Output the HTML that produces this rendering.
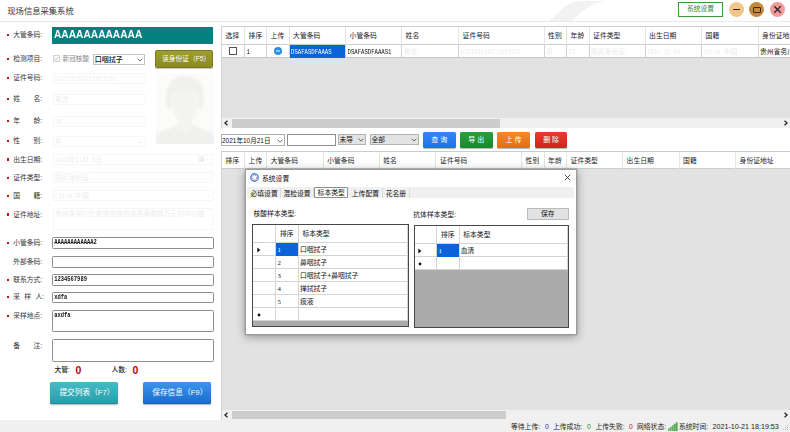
<!DOCTYPE html>
<html lang="zh-CN">
<head>
<meta charset="utf-8">
<title>现场信息采集系统</title>
<style>
*{box-sizing:border-box;margin:0;padding:0}
html,body{width:790px;height:432px;overflow:hidden;background:#fff}
body{position:relative;font-family:"Liberation Sans","Noto Sans CJK SC",sans-serif;font-size:6.8px;color:#222;line-height:1}
.abs{position:absolute}
.t{position:absolute;white-space:nowrap;line-height:10px;height:10px}
.lbl{position:absolute;left:13.2px;white-space:nowrap;line-height:10px;height:10px;color:#333}
.dot{position:absolute;left:7px;width:2.4px;height:2.4px;background:#cc1111}
.inp{position:absolute;background:#fff;border:1px solid #8e8e8e;border-radius:1.3px;font-size:5.45px;font-weight:bold;padding-left:1.2px;line-height:9.6px;color:#111;font-family:"Liberation Mono","Noto Sans CJK SC",monospace}
.dis{position:absolute;background:#fff;border:1px solid #f6f6f6;font-size:6.8px;padding-left:1.5px;color:#ededed;white-space:nowrap;overflow:hidden}
.tall{display:inline-block;transform:scaleY(1.22);transform-origin:0 55%}
.btn{position:absolute;color:#fff;text-align:center;border-radius:1.5px;white-space:nowrap}
.hd{position:absolute;top:0;height:100%;border-right:1px solid #e4e4e4;padding-left:3.6px;white-space:nowrap;overflow:hidden}
.cell{position:absolute;top:0;height:100%;border-right:1px solid #d0d0d0;padding-left:1.5px;white-space:nowrap;overflow:hidden;font-size:6.8px}
.m{display:inline-block;font-family:"Liberation Mono",monospace;font-size:5.65px;transform:scaleY(1.22);transform-origin:0 55%;white-space:pre}
</style>
</head>
<body>

<div class="abs" style="left:0;top:0;width:790px;height:21px;background:#fff;overflow:hidden">
<svg class="abs" style="left:540px;top:0" width="80" height="21" viewBox="0 0 80 21"><path d="M9 21 L32 21 Q44 8 58 2.5 Q63 1 66 1 L40 1 Q32 1.5 26 6 Z" fill="#f2f2f2"/></svg>
<div class="t" style="left:7.3px;top:6.3px;font-size:8.3px;line-height:11px;height:11px;color:#333">现场信息采集系统</div>
<div class="abs" style="left:678px;top:2px;width:45px;height:14.5px;border:1px solid #3c9a3c;background:#fff;color:#2e8b2e;text-align:center;line-height:12.5px;font-size:6.8px">系统设置</div>
<div class="abs" style="left:728.5px;top:2px;width:15px;height:15px;border-radius:50%;background:#f2c687"></div><div class="abs" style="left:732.5px;top:9px;width:7px;height:1.3px;background:#222"></div>
<div class="abs" style="left:749px;top:2px;width:15px;height:15px;border-radius:50%;background:#c6893a"></div><div class="abs" style="left:752.5px;top:6.5px;width:8px;height:6px;border:1.2px solid #3a2a10;border-radius:1px"></div>
<div class="abs" style="left:769.5px;top:2px;width:15px;height:15px;border-radius:50%;background:#f19a9a"></div><svg class="abs" style="left:769.5px;top:2px" width="15" height="15" viewBox="0 0 15 15"><path d="M4.3 4.3 L10.7 10.7 M10.7 4.3 L4.3 10.7" stroke="#222" stroke-width="1.25" fill="none"/></svg>
</div>
<div class="abs" style="left:0;top:21px;width:790px;height:1px;background:#e9e9e9"></div>
<div class="dot" style="top:34px"></div>
<div class="lbl" style="top:30.4px">大管条码:</div>
<div class="dot" style="top:58px"></div>
<div class="lbl" style="top:54.4px">检测项目:</div>
<div class="dot" style="top:77px"></div>
<div class="lbl" style="top:73.4px">证件号码:</div>
<div class="dot" style="top:98px"></div>
<div class="lbl" style="top:94.4px">姓　　名:</div>
<div class="dot" style="top:120px"></div>
<div class="lbl" style="top:116.4px">年　　龄:</div>
<div class="dot" style="top:139.5px"></div>
<div class="lbl" style="top:135.9px">性　　别:</div>
<div class="dot" style="top:158.4px"></div>
<div class="lbl" style="top:154.8px">出生日期:</div>
<div class="dot" style="top:176.5px"></div>
<div class="lbl" style="top:172.9px">证件类型:</div>
<div class="dot" style="top:194.5px"></div>
<div class="lbl" style="top:190.9px">国　　籍:</div>
<div class="dot" style="top:213.4px"></div>
<div class="lbl" style="top:209.8px">证件地址:</div>
<div class="dot" style="top:242px"></div>
<div class="lbl" style="top:238.4px">小管条码:</div>
<div class="lbl" style="top:256.9px">外部条码:</div>
<div class="dot" style="top:278.5px"></div>
<div class="lbl" style="top:274.9px">联系方式:</div>
<div class="dot" style="top:296px"></div>
<div class="lbl" style="top:292.4px">采<span style="margin:0 4.3px">样</span>人:</div>
<div class="dot" style="top:314.5px"></div>
<div class="lbl" style="top:310.9px">采样地点:</div>
<div class="lbl" style="top:340.9px">备　　注:</div>
<div class="abs" style="left:52.3px;top:27.1px;width:161px;height:16.7px;background:#048080;color:#fff;font-weight:bold;font-size:10.2px;line-height:16px;padding-left:1.7px;white-space:nowrap"><span style="display:inline-block;transform:scaleY(1.1);transform-origin:50% 60%">AAAAAAAAAAAA</span></div>
<div class="abs" style="left:52.7px;top:55.3px;width:7px;height:7px;border:1px solid #d2d2d2;background:#f7f7f7"></div>
<svg class="abs" style="left:52.7px;top:55.3px" width="7" height="7" viewBox="0 0 7 7"><path d="M1.6 3.5 L3 5 L5.5 2" stroke="#b8b8b8" stroke-width="0.8" fill="none"/></svg>
<div class="t" style="left:62.5px;top:54.2px;color:#8c8c8c;font-size:6.7px">新冠核酸</div>
<div class="abs" style="left:92.5px;top:53.7px;width:52.5px;height:11.2px;border:1px solid #c2c2c2;background:#fff"></div>
<div class="t" style="left:94.7px;top:54.6px;font-size:7px;font-weight:500;color:#111">口咽拭子</div>
<svg class="abs" style="left:136.7px;top:57.9px" width="6" height="4" viewBox="0 0 6 4"><path d="M0.6 0.7 L3 3.1 L5.4 0.7" stroke="#444" stroke-width="0.8" fill="none"/></svg>
<div class="btn" style="left:155.4px;top:50.2px;width:57.9px;height:17.8px;padding-left:3.6px;border:0.6px solid #78781a;background:linear-gradient(#9e9e30,#8a8a1e);line-height:16.6px;font-size:6.75px;box-shadow:0 1px 1px rgba(0,0,0,.22)">读身份证（F5）</div>
<div class="dis" style="left:52.5px;top:72.5px;width:93px;height:11px;line-height:9px"><span class="m">52212619921106153l</span></div>
<div class="dis" style="left:52.5px;top:93.5px;width:93px;height:11px;line-height:9px">黄念</div>
<div class="dis" style="left:52.5px;top:115.6px;width:93px;height:11px;line-height:9px"><span class="m">29</span></div>
<div class="dis" style="left:52.5px;top:135.8px;width:93px;height:11px;line-height:9px">男</div>
<div class="dis" style="left:52.5px;top:153.5px;width:160.5px;height:11px;line-height:9px"><span class="m">1992</span>年<span class="m">11</span>月<span class="m"> 5</span>日</div>
<div class="dis" style="left:52.5px;top:172px;width:160.5px;height:11px;line-height:9px">居民身份证</div>
<div class="dis" style="left:52.5px;top:190px;width:160.5px;height:11px;line-height:9px"><span class="m">China </span>中国</div>
<div class="dis" style="left:52.5px;top:208px;width:160.5px;height:22px;line-height:9px">贵州省务川仡佬族苗族自治县黄都镇万云村中心组</div>
<svg class="abs" style="left:138px;top:140.8px" width="5" height="3.4" viewBox="0 0 5 3.4"><path d="M0.5 0.6 L2.5 2.6 L4.5 0.6" stroke="#e9e9e9" stroke-width="0.7" fill="none"/></svg>
<svg class="abs" style="left:205.5px;top:176.8px" width="5" height="3.4" viewBox="0 0 5 3.4"><path d="M0.5 0.6 L2.5 2.6 L4.5 0.6" stroke="#e9e9e9" stroke-width="0.7" fill="none"/></svg>
<svg class="abs" style="left:205.5px;top:194.3px" width="5" height="3.4" viewBox="0 0 5 3.4"><path d="M0.5 0.6 L2.5 2.6 L4.5 0.6" stroke="#e9e9e9" stroke-width="0.7" fill="none"/></svg>
<div class="abs" style="left:198px;top:156.2px;width:6px;height:6px;border:0.8px solid #ebebeb;border-radius:1px"></div><div class="abs" style="left:199.5px;top:158.2px;width:3px;height:2.4px;background:#ededed"></div><div class="abs" style="left:205.8px;top:158.6px;width:0;height:0;border-left:1.5px solid transparent;border-right:1.5px solid transparent;border-top:2px solid #e8e8e8"></div>
<div class="abs" style="left:156px;top:72.8px;width:58px;height:71px;background:#fbfbfa;overflow:hidden"><svg width="58" height="71" viewBox="0 0 58 71"><defs><filter id="bl" x="-20%" y="-20%" width="140%" height="140%"><feGaussianBlur stdDeviation="1.3"/></filter></defs><g filter="url(#bl)"><path d="M-2 73 L-2 63 C4 58 14 56 22 52 L36 52 C44 56 54 58 60 63 L60 73 Z" fill="#f0f0ef"/><path d="M22 44 L36 44 L36 54 L29 60 L22 54 Z" fill="#f4f4f2"/><path d="M10.5 30 C8 12 17 3 29 3 C42 3 50 12 47.5 30 C47 35 45 37 43 36 L42 22 L16 22 L15 36 C13 37 11 35 10.5 30 Z" fill="#f0f0ef"/><path d="M16.5 20 C22 17 36 17 41.5 20 C43 32 42 42 36 47 C32 51 26 51 22 47 C16 42 15 32 16.5 20 Z" fill="#f4f4f2"/><path d="M20 26 L26 26 M32 26 L38 26" stroke="#ebebea" stroke-width="1.2"/><path d="M26 41 L32 41" stroke="#eeeeec" stroke-width="1"/></g></svg></div>
<div class="inp" style="left:52.1px;top:237.3px;width:162px;height:11.9px"><span class="tall">AAAAAAAAAAAA2</span></div>
<div class="inp" style="left:52.1px;top:256.3px;width:162px;height:11.7px"></div>
<div class="inp" style="left:52.1px;top:274.1px;width:162px;height:11.8px"><span class="tall">1234567989</span></div>
<div class="inp" style="left:52.1px;top:291.6px;width:162px;height:11.9px"><span class="tall">xdfa</span></div>
<div class="inp" style="left:52.1px;top:309.8px;width:162px;height:22.6px"><span class="tall">axdfa</span></div>
<div class="inp" style="left:52.1px;top:339.3px;width:162px;height:22.6px"></div>
<div class="t" style="left:54.5px;top:365px;font-size:6.8px;font-weight:500;color:#222">大管:</div><div class="t" style="left:75.5px;top:364.5px;font-size:10.5px;font-weight:bold;color:#c00000;line-height:11px;height:11px">0</div>
<div class="t" style="left:111.5px;top:365px;font-size:6.8px;font-weight:500;color:#222">人数:</div><div class="t" style="left:132.5px;top:364.5px;font-size:10.5px;font-weight:bold;color:#c00000;line-height:11px;height:11px">0</div>
<div class="btn" style="left:50px;top:381.6px;width:68.3px;height:22.6px;padding-left:5.6px;background:linear-gradient(#45bcc4,#279eac);line-height:22px;font-size:7.7px;box-shadow:0 1px 1.5px rgba(0,0,0,.3),inset 0 -1px 0 rgba(0,0,0,.12)">提交列表（F7）</div>
<div class="btn" style="left:143px;top:381.6px;width:68px;height:22.6px;padding-left:5.6px;background:linear-gradient(#3d94ee,#176ccc);line-height:22px;font-size:7.7px;box-shadow:0 1px 1.5px rgba(0,0,0,.3),inset 0 -1px 0 rgba(0,0,0,.12)">保存信息（F9）</div>
<div class="abs" style="left:221.3px;top:25.7px;width:569px;height:102.3px;background:#e2e2e2;border-top:1.6px solid #d0d0d0;border-left:1px solid #d2d2d2"></div>
<div class="abs" style="left:0;top:27.3px;width:790px;height:17.5px;overflow:hidden">
<div class="abs" style="left:222px;top:0;width:568px;height:17.5px;background:#fff;border-bottom:1px solid #cccccc"></div>
<div class="hd" style="left:222px;width:23px;line-height:18.4px">选择</div>
<div class="hd" style="left:245px;width:22px;line-height:18.4px">排序</div>
<div class="hd" style="left:267px;width:22.5px;line-height:18.4px">上传</div>
<div class="hd" style="left:289.5px;width:56.5px;line-height:18.4px">大管条码</div>
<div class="hd" style="left:346px;width:56px;line-height:18.4px">小管条码</div>
<div class="hd" style="left:402px;width:57px;line-height:18.4px">姓名</div>
<div class="hd" style="left:459px;width:85.5px;line-height:18.4px">证件号码</div>
<div class="hd" style="left:544.5px;width:22.5px;line-height:18.4px">性别</div>
<div class="hd" style="left:567px;width:22.5px;line-height:18.4px">年龄</div>
<div class="hd" style="left:589.5px;width:56.0px;line-height:18.4px">证件类型</div>
<div class="hd" style="left:645.5px;width:56.5px;line-height:18.4px">出生日期</div>
<div class="hd" style="left:702px;width:56.5px;line-height:18.4px">国籍</div>
<div class="hd" style="left:758.5px;width:56.5px;line-height:18.4px">身份证地址</div>
</div>
<div class="abs" style="left:0;top:44.8px;width:790px;height:13px;overflow:hidden">
<div class="abs" style="left:222px;top:0;width:568px;height:13px;background:#fff;border-bottom:1px solid #c6c6c6"></div>
<div class="cell" style="left:222px;width:23px;line-height:13px;color:#111;"></div>
<div class="cell" style="left:245px;width:22px;line-height:13px;color:#111;"><span class="m">1</span></div>
<div class="cell" style="left:267px;width:22.5px;line-height:13px;color:#111;"></div>
<div class="cell" style="left:289.5px;width:56.5px;line-height:13px;background:#0a64d8;color:#fff;"><span class="m">DSAFASDFAAAS</span></div>
<div class="cell" style="left:346px;width:56px;line-height:13px;color:#111;"><span class="m">DSAFASDFAAAS1</span></div>
<div class="cell" style="left:402px;width:57px;line-height:13px;color:#ececec;">黄念</div>
<div class="cell" style="left:459px;width:85.5px;line-height:13px;color:#ececec;"><span class="m">52212619921106153l</span></div>
<div class="cell" style="left:544.5px;width:22.5px;line-height:13px;color:#ececec;">男</div>
<div class="cell" style="left:567px;width:22.5px;line-height:13px;color:#ececec;"><span class="m">29</span></div>
<div class="cell" style="left:589.5px;width:56.0px;line-height:13px;color:#ececec;">居民身份证</div>
<div class="cell" style="left:645.5px;width:56.5px;line-height:13px;color:#ececec;"><span class="m">1992-11-05</span></div>
<div class="cell" style="left:702px;width:56.5px;line-height:13px;color:#ececec;"><span class="m">China </span>中国</div>
<div class="cell" style="left:758.5px;width:56.5px;line-height:13px;color:#111;">贵州省务川仡佬族</div>
<div class="abs" style="left:229.3px;top:2.4px;width:7.6px;height:7.6px;border:0.8px solid #555;background:#fff"></div>
<div class="abs" style="left:274px;top:2.2px;width:8px;height:8px;border-radius:50%;background:#2a8fe6"></div><div class="abs" style="left:276.2px;top:4.8px;width:3.6px;height:2.8px;border-radius:0.8px;background:#8ccaf6"></div>
</div>
<div class="abs" style="left:222px;top:118.2px;width:568px;height:9.7px;background:#f0f0f0"></div>
<div class="abs" style="left:231.5px;top:119px;width:268.5px;height:8.5px;background:#cdcdcd"></div>
<svg class="abs" style="left:224.3px;top:120.2px" width="4" height="6" viewBox="0 0 4 6"><path d="M3.5 0.7 L0.9 3 L3.5 5.3" stroke="#222" stroke-width="1.25" fill="none"/></svg>
<svg class="abs" style="left:783.5px;top:120.2px" width="4" height="6" viewBox="0 0 4 6"><path d="M0.5 0.7 L3.1 3 L0.5 5.3" stroke="#222" stroke-width="1.25" fill="none"/></svg>
<div class="abs" style="left:220.5px;top:134.4px;width:64px;height:11.5px;border:1px solid #adadad;background:#fff"></div>
<div class="t" style="left:222px;top:135.5px;font-size:6.5px;color:#111">2021年10月21日</div>
<svg class="abs" style="left:276.8px;top:138.6px" width="6" height="4" viewBox="0 0 6 4"><path d="M0.6 0.7 L3 3.1 L5.4 0.7" stroke="#444" stroke-width="0.8" fill="none"/></svg>
<div class="abs" style="left:287px;top:134.4px;width:49px;height:11.5px;border:1px solid #8f8f8f;background:#fff"></div>
<div class="abs" style="left:338px;top:134px;width:28px;height:11.2px;border:1px solid #b2b2b2;background:#e3e3e3"></div>
<div class="t" style="left:339.5px;top:135px;font-size:6.8px;color:#111">未导</div>
<svg class="abs" style="left:357.5px;top:138.2px" width="6" height="4" viewBox="0 0 6 4"><path d="M0.6 0.7 L3 3.1 L5.4 0.7" stroke="#444" stroke-width="0.8" fill="none"/></svg>
<div class="abs" style="left:369.6px;top:134px;width:49px;height:11.2px;border:1px solid #b2b2b2;background:#e3e3e3"></div>
<div class="t" style="left:371.5px;top:135px;font-size:6.8px;color:#111">全部</div>
<svg class="abs" style="left:410.5px;top:138.2px" width="6" height="4" viewBox="0 0 6 4"><path d="M0.6 0.7 L3 3.1 L5.4 0.7" stroke="#444" stroke-width="0.8" fill="none"/></svg>
<div class="btn" style="left:423px;top:132.3px;width:32.5px;height:15.6px;background:linear-gradient(#3386f5,#2070e6);line-height:15.4px;font-size:7px;box-shadow:0 0.5px 1px rgba(0,0,0,.3)">查 询</div>
<div class="btn" style="left:460px;top:132.3px;width:32.5px;height:15.6px;background:linear-gradient(#29a03c,#1a882c);line-height:15.4px;font-size:7px;box-shadow:0 0.5px 1px rgba(0,0,0,.3)">导 出</div>
<div class="btn" style="left:497.4px;top:132.3px;width:32.5px;height:15.6px;background:linear-gradient(#f4892a,#e26e12);line-height:15.4px;font-size:7px;box-shadow:0 0.5px 1px rgba(0,0,0,.3)">上 传</div>
<div class="btn" style="left:534.9px;top:132.3px;width:32.5px;height:15.6px;background:linear-gradient(#ea3a30,#d0241c);line-height:15.4px;font-size:7px;box-shadow:0 0.5px 1px rgba(0,0,0,.3)">删 除</div>
<div class="abs" style="left:221.3px;top:150.8px;width:569px;height:269.2px;background:#e2e2e2;border-top:1.2px solid #cbcbcb;border-left:1px solid #d2d2d2"></div>
<div class="abs" style="left:0;top:152px;width:790px;height:17.4px;overflow:hidden">
<div class="abs" style="left:222px;top:0;width:568px;height:17.4px;background:#fff;border-bottom:1px solid #cccccc"></div>
<div class="hd" style="left:222px;width:23px;line-height:17px">排序</div>
<div class="hd" style="left:245px;width:22.19999999999999px;line-height:17px">上传</div>
<div class="hd" style="left:267.2px;width:56.5px;line-height:17px">大管条码</div>
<div class="hd" style="left:323.7px;width:56.0px;line-height:17px">小管条码</div>
<div class="hd" style="left:379.7px;width:56.80000000000001px;line-height:17px">姓名</div>
<div class="hd" style="left:436.5px;width:85.5px;line-height:17px">证件号码</div>
<div class="hd" style="left:522px;width:22.5px;line-height:17px">性别</div>
<div class="hd" style="left:544.5px;width:22.5px;line-height:17px">年龄</div>
<div class="hd" style="left:567px;width:56px;line-height:17px">证件类型</div>
<div class="hd" style="left:623px;width:56.5px;line-height:17px">出生日期</div>
<div class="hd" style="left:679.5px;width:56.5px;line-height:17px">国籍</div>
<div class="hd" style="left:736px;width:64px;line-height:17px">身份证地址</div>
</div>
<div class="abs" style="left:222px;top:409.5px;width:568px;height:10.5px;background:#f0f0f0"></div>
<div class="abs" style="left:231.5px;top:410.5px;width:274px;height:8.5px;background:#cdcdcd"></div>
<svg class="abs" style="left:224.3px;top:411.7px" width="4" height="6" viewBox="0 0 4 6"><path d="M3.5 0.7 L0.9 3 L3.5 5.3" stroke="#222" stroke-width="1.25" fill="none"/></svg>
<svg class="abs" style="left:783.5px;top:411.7px" width="4" height="6" viewBox="0 0 4 6"><path d="M0.5 0.7 L3.1 3 L0.5 5.3" stroke="#222" stroke-width="1.25" fill="none"/></svg>
<div class="abs" style="left:0;top:420px;width:790px;height:12px;background:#f0f0f0"></div>
<div class="t" style="left:511px;top:421.7px;color:#222">等待上传:</div><div class="t" style="left:545px;top:421.7px;color:#2030c0">0</div>
<div class="t" style="left:553px;top:421.7px;color:#222">上传成功:</div><div class="t" style="left:587px;top:421.7px;color:#2a8a2a">0</div>
<div class="t" style="left:595.5px;top:421.7px;color:#222">上传失败:</div><div class="t" style="left:629px;top:421.7px;color:#d02020">0</div>
<div class="t" style="left:637px;top:421.7px;color:#222">网络状态:</div>
<svg class="abs" style="left:668.4px;top:421.8px" width="10" height="9" viewBox="0 0 10 9"><rect x="0" y="6.2" width="1.8" height="2.8" fill="#6fba6f"/><rect x="1.95" y="4.8" width="1.8" height="4.2" fill="#66b566"/><rect x="3.9" y="3.3" width="1.8" height="5.7" fill="#5db05d"/><rect x="5.85" y="1.8" width="1.8" height="7.2" fill="#55ab55"/><rect x="7.8" y="0.3" width="1.8" height="8.7" fill="#4ea64e"/></svg>
<div class="t" style="left:679px;top:421.7px;color:#222">系统时间:</div>
<div class="t" style="left:712.5px;top:421.7px;color:#222;font-size:7.15px">2021-10-21 18:19:53</div>
<svg class="abs" style="left:782px;top:424px" width="7" height="7" viewBox="0 0 7 7"><g fill="#b5b5b5"><rect x="5" y="1" width="1" height="1"/><rect x="3" y="3" width="1" height="1"/><rect x="5" y="3" width="1" height="1"/><rect x="1" y="5" width="1" height="1"/><rect x="3" y="5" width="1" height="1"/><rect x="5" y="5" width="1" height="1"/></g></svg>
<div class="abs" style="left:245.0px;top:168.6px;width:332.1px;height:166.3px;background:#fff;border:1px solid #9c9c9c;box-shadow:0 2px 9px rgba(0,0,0,.34),0 0 2px rgba(0,0,0,.25)">
<svg class="abs" style="left:4.3px;top:3.4px" width="9" height="9" viewBox="0 0 18 18"><circle cx="9" cy="9" r="7.4" fill="#fff" stroke="#3f86dc" stroke-width="2.8"/><circle cx="9" cy="9" r="4.6" fill="none" stroke="#e05a90" stroke-width="2" stroke-dasharray="3 2"/><circle cx="9" cy="9" r="2.8" fill="#fff"/></svg>
<div class="t" style="left:16.0px;top:4.0px;color:#111">系统设置</div>
<svg class="abs" style="left:317.5px;top:4.4px" width="7" height="7" viewBox="0 0 7 7"><path d="M0.7 0.7 L6.3 6.3 M6.3 0.7 L0.7 6.3" stroke="#222" stroke-width="0.8" fill="none"/></svg>
<div class="abs" style="left:0.6px;top:17.1px;width:327.0px;height:11.6px;background:#f0f0f0"></div>
<div class="abs" style="left:2.0px;top:18.0px;width:33.19999999999999px;height:10.8px;border-right:1px solid #dcdcdc;text-align:center;line-height:11px;color:#111">必填设置</div>
<div class="abs" style="left:35.2px;top:18.0px;width:32.80000000000001px;height:10.8px;border-right:1px solid #dcdcdc;text-align:center;line-height:11px;color:#111">混检设置</div>
<div class="abs" style="left:68.2px;top:17.3px;width:34.0px;height:11.5px;border:1px solid #8c8c8c;border-radius:1px;background:#fff;text-align:center;line-height:10px;color:#111">标本类型</div>
<div class="abs" style="left:103.0px;top:18.0px;width:33.80000000000001px;height:10.8px;border-right:1px solid #dcdcdc;text-align:center;line-height:11px;color:#111">上传配置</div>
<div class="abs" style="left:136.8px;top:18.0px;width:27.19999999999999px;height:10.8px;border-right:1px solid #dcdcdc;text-align:center;line-height:11px;color:#111">花名册</div>
<div class="t" style="left:7.5px;top:39.9px;color:#111">核酸样本类型:</div>
<div class="t" style="left:167.3px;top:40.4px;color:#111">抗体样本类型:</div>
<div class="abs" style="left:281.0px;top:38.2px;width:41.7px;height:12px;background:#e2e2e2;border:1px solid #bcbcbc;text-align:center;line-height:10.5px;color:#111">保存</div>
<div class="abs" style="left:6.2px;top:54.8px;width:156.6px;height:102.4px;border:1px solid #474747;background:#ababab;overflow:hidden">
<div class="abs" style="left:0;top:0px;width:154.6px;height:17.7px;background:#fff;border-bottom:1px solid #d4d4d4">
<div class="abs" style="left:0px;top:0;width:23.3px;height:17.7px;border-right:1px solid #d4d4d4;padding-left:3.5px;line-height:18.9px;white-space:nowrap;color:#111;"></div>
<div class="abs" style="left:23.3px;top:0;width:22.499999999999996px;height:17.7px;border-right:1px solid #d4d4d4;padding-left:3.5px;line-height:18.9px;white-space:nowrap;color:#111;">排序</div>
<div class="abs" style="left:45.8px;top:0;width:108.8px;height:17.7px;border-right:1px solid #d4d4d4;padding-left:3.5px;line-height:18.9px;white-space:nowrap;color:#111;">标本类型</div>
</div>
<div class="abs" style="left:0;top:17.7px;width:154.6px;height:13.0px;background:#fff;border-bottom:1px solid #d4d4d4">
<div class="abs" style="left:0px;top:0;width:23.3px;height:13.0px;border-right:1px solid #d4d4d4;padding-left:1px;font-size:6.8px;line-height:14.2px;white-space:nowrap;color:#111;"><svg style="position:absolute;left:3.6px;top:4px" width="4" height="6" viewBox="0 0 4 6"><path d="M0.3 0.5 L3.4 3 L0.3 5.5 Z" fill="#111"/></svg></div>
<div class="abs" style="left:23.3px;top:0;width:22.499999999999996px;height:13.0px;border-right:1px solid #d4d4d4;padding-left:1.1px;font-size:6.8px;font-family:'Liberation Serif',serif;line-height:14.2px;white-space:nowrap;color:#111;background:#0a64d8;color:#fff;">1</div>
<div class="abs" style="left:45.8px;top:0;width:108.8px;height:13.0px;border-right:1px solid #d4d4d4;padding-left:1px;font-size:6.8px;line-height:14.2px;white-space:nowrap;color:#111;">口咽拭子</div>
</div>
<div class="abs" style="left:0;top:30.7px;width:154.6px;height:13.0px;background:#fff;border-bottom:1px solid #d4d4d4">
<div class="abs" style="left:0px;top:0;width:23.3px;height:13.0px;border-right:1px solid #d4d4d4;padding-left:1px;font-size:6.8px;line-height:14.2px;white-space:nowrap;color:#111;"></div>
<div class="abs" style="left:23.3px;top:0;width:22.499999999999996px;height:13.0px;border-right:1px solid #d4d4d4;padding-left:1.1px;font-size:6.8px;font-family:'Liberation Serif',serif;line-height:14.2px;white-space:nowrap;color:#111;">2</div>
<div class="abs" style="left:45.8px;top:0;width:108.8px;height:13.0px;border-right:1px solid #d4d4d4;padding-left:1px;font-size:6.8px;line-height:14.2px;white-space:nowrap;color:#111;">鼻咽拭子</div>
</div>
<div class="abs" style="left:0;top:43.7px;width:154.6px;height:13.0px;background:#fff;border-bottom:1px solid #d4d4d4">
<div class="abs" style="left:0px;top:0;width:23.3px;height:13.0px;border-right:1px solid #d4d4d4;padding-left:1px;font-size:6.8px;line-height:14.2px;white-space:nowrap;color:#111;"></div>
<div class="abs" style="left:23.3px;top:0;width:22.499999999999996px;height:13.0px;border-right:1px solid #d4d4d4;padding-left:1.1px;font-size:6.8px;font-family:'Liberation Serif',serif;line-height:14.2px;white-space:nowrap;color:#111;">3</div>
<div class="abs" style="left:45.8px;top:0;width:108.8px;height:13.0px;border-right:1px solid #d4d4d4;padding-left:1px;font-size:6.8px;line-height:14.2px;white-space:nowrap;color:#111;">口咽拭子+鼻咽拭子</div>
</div>
<div class="abs" style="left:0;top:56.7px;width:154.6px;height:13.0px;background:#fff;border-bottom:1px solid #d4d4d4">
<div class="abs" style="left:0px;top:0;width:23.3px;height:13.0px;border-right:1px solid #d4d4d4;padding-left:1px;font-size:6.8px;line-height:14.2px;white-space:nowrap;color:#111;"></div>
<div class="abs" style="left:23.3px;top:0;width:22.499999999999996px;height:13.0px;border-right:1px solid #d4d4d4;padding-left:1.1px;font-size:6.8px;font-family:'Liberation Serif',serif;line-height:14.2px;white-space:nowrap;color:#111;">4</div>
<div class="abs" style="left:45.8px;top:0;width:108.8px;height:13.0px;border-right:1px solid #d4d4d4;padding-left:1px;font-size:6.8px;line-height:14.2px;white-space:nowrap;color:#111;">掸拭拭子</div>
</div>
<div class="abs" style="left:0;top:69.7px;width:154.6px;height:13.0px;background:#fff;border-bottom:1px solid #d4d4d4">
<div class="abs" style="left:0px;top:0;width:23.3px;height:13.0px;border-right:1px solid #d4d4d4;padding-left:1px;font-size:6.8px;line-height:14.2px;white-space:nowrap;color:#111;"></div>
<div class="abs" style="left:23.3px;top:0;width:22.499999999999996px;height:13.0px;border-right:1px solid #d4d4d4;padding-left:1.1px;font-size:6.8px;font-family:'Liberation Serif',serif;line-height:14.2px;white-space:nowrap;color:#111;">5</div>
<div class="abs" style="left:45.8px;top:0;width:108.8px;height:13.0px;border-right:1px solid #d4d4d4;padding-left:1px;font-size:6.8px;line-height:14.2px;white-space:nowrap;color:#111;">痰液</div>
</div>
<div class="abs" style="left:0;top:82.7px;width:154.6px;height:13.0px;background:#fff;border-bottom:1px solid #d4d4d4">
<div class="abs" style="left:0px;top:0;width:23.3px;height:13.0px;border-right:1px solid #d4d4d4;padding-left:1px;font-size:6.8px;line-height:14.2px;white-space:nowrap;color:#111;"><svg style="position:absolute;left:3.4px;top:5.3px" width="4" height="4" viewBox="0 0 4 4"><circle cx="2" cy="2" r="1.4" fill="#111"/></svg></div>
<div class="abs" style="left:23.3px;top:0;width:22.499999999999996px;height:13.0px;border-right:1px solid #d4d4d4;padding-left:1.1px;font-size:6.8px;font-family:'Liberation Serif',serif;line-height:14.2px;white-space:nowrap;color:#111;"></div>
<div class="abs" style="left:45.8px;top:0;width:108.8px;height:13.0px;border-right:1px solid #d4d4d4;padding-left:1px;font-size:6.8px;line-height:14.2px;white-space:nowrap;color:#111;"></div>
</div>
</div>
<div class="abs" style="left:167.6px;top:55.9px;width:155.4px;height:102.4px;border:1px solid #474747;background:#ababab;overflow:hidden">
<div class="abs" style="left:0;top:0px;width:153.4px;height:17.7px;background:#fff;border-bottom:1px solid #d4d4d4">
<div class="abs" style="left:0px;top:0;width:22.8px;height:17.7px;border-right:1px solid #d4d4d4;padding-left:3.5px;line-height:18.9px;white-space:nowrap;color:#111;"></div>
<div class="abs" style="left:22.8px;top:0;width:22.400000000000002px;height:17.7px;border-right:1px solid #d4d4d4;padding-left:3.5px;line-height:18.9px;white-space:nowrap;color:#111;">排序</div>
<div class="abs" style="left:45.2px;top:0;width:108.2px;height:17.7px;border-right:1px solid #d4d4d4;padding-left:3.5px;line-height:18.9px;white-space:nowrap;color:#111;">标本类型</div>
</div>
<div class="abs" style="left:0;top:17.7px;width:153.4px;height:13.0px;background:#fff;border-bottom:1px solid #d4d4d4">
<div class="abs" style="left:0px;top:0;width:22.8px;height:13.0px;border-right:1px solid #d4d4d4;padding-left:1px;font-size:6.8px;line-height:14.2px;white-space:nowrap;color:#111;"><svg style="position:absolute;left:3.6px;top:4px" width="4" height="6" viewBox="0 0 4 6"><path d="M0.3 0.5 L3.4 3 L0.3 5.5 Z" fill="#111"/></svg></div>
<div class="abs" style="left:22.8px;top:0;width:22.400000000000002px;height:13.0px;border-right:1px solid #d4d4d4;padding-left:1.1px;font-size:6.8px;font-family:'Liberation Serif',serif;line-height:14.2px;white-space:nowrap;color:#111;background:#0a64d8;color:#fff;">1</div>
<div class="abs" style="left:45.2px;top:0;width:108.2px;height:13.0px;border-right:1px solid #d4d4d4;padding-left:1px;font-size:6.8px;line-height:14.2px;white-space:nowrap;color:#111;">血清</div>
</div>
<div class="abs" style="left:0;top:30.7px;width:153.4px;height:13.0px;background:#fff;border-bottom:1px solid #d4d4d4">
<div class="abs" style="left:0px;top:0;width:22.8px;height:13.0px;border-right:1px solid #d4d4d4;padding-left:1px;font-size:6.8px;line-height:14.2px;white-space:nowrap;color:#111;"><svg style="position:absolute;left:3.4px;top:5.3px" width="4" height="4" viewBox="0 0 4 4"><circle cx="2" cy="2" r="1.4" fill="#111"/></svg></div>
<div class="abs" style="left:22.8px;top:0;width:22.400000000000002px;height:13.0px;border-right:1px solid #d4d4d4;padding-left:1.1px;font-size:6.8px;font-family:'Liberation Serif',serif;line-height:14.2px;white-space:nowrap;color:#111;"></div>
<div class="abs" style="left:45.2px;top:0;width:108.2px;height:13.0px;border-right:1px solid #d4d4d4;padding-left:1px;font-size:6.8px;line-height:14.2px;white-space:nowrap;color:#111;"></div>
</div>
</div>
</div>
</body>
</html>
